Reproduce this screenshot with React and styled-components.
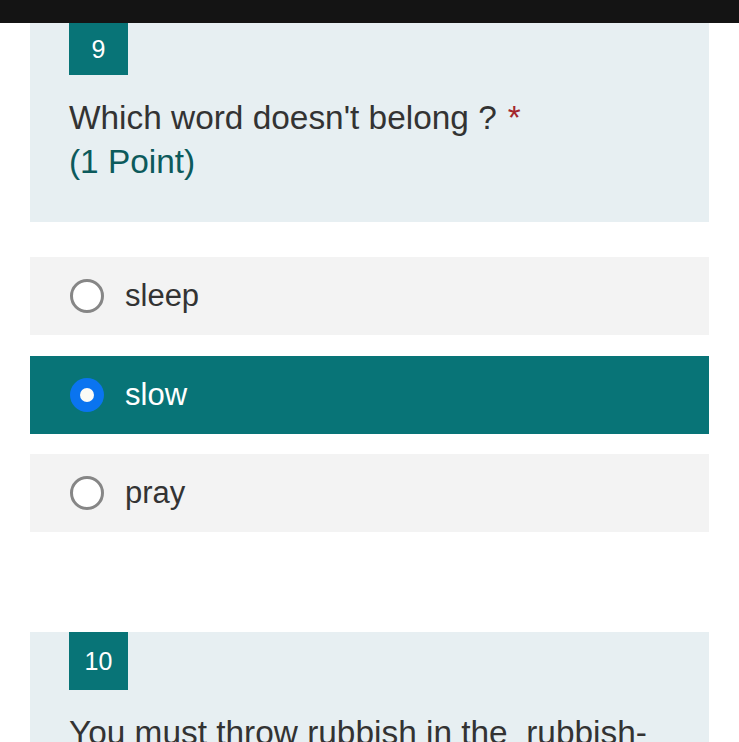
import React, {useState} from 'react';
import styled, {createGlobalStyle} from 'styled-components';

const GlobalStyle = createGlobalStyle`
  body {
    margin: 0;
    background: #ffffff;
    font-family: "Liberation Sans", Arial, sans-serif;
  }
`

const StatusBar = styled.div`
  height: 23px;
  background: #141414;
`

const Page = styled.div`
  padding: 0 30px;
  display: flex;
  flex-direction: column;
`

const QuestionCard = styled.section`
  background: #e7eff2;
  padding: 0 39px ${p => p.bottom || 38}px;
  margin-top: ${p => p.top || 0}px;
`

const Badge = styled.div`
  width: 59px;
  height: ${p => p.h || 58}px;
  background: #087477;
  color: #ffffff;
  font-size: 25px;
  display: flex;
  align-items: center;
  justify-content: center;
`

const Title = styled.div`
  margin-top: 21px;
  font-size: 33.4px;
  line-height: 44px;
  color: #333333;
`

const Required = styled.span`
  color: #a4262c;
  margin-left: 11px;
`

const Points = styled.div`
  color: #0c5a5c;
`

const Options = styled.div`
  margin-top: 35px;
  display: flex;
  flex-direction: column;
  gap: 20.5px;
`

const OptionRow = styled.label`
  height: 78px;
  display: flex;
  align-items: center;
  gap: 21px;
  padding-left: 40px;
  background: ${p => (p.selected ? '#087477' : '#f3f3f3')};
  color: ${p => (p.selected ? '#ffffff' : '#333333')};
  font-size: 31px;
  cursor: pointer;
`

const Radio = styled.span`
  box-sizing: border-box;
  width: 34px;
  height: 34px;
  border-radius: 50%;
  display: flex;
  align-items: center;
  justify-content: center;
  background: ${p => (p.checked ? '#0a74f0' : '#ffffff')};
  border: ${p => (p.checked ? 'none' : '3px solid #868686')};

  &::after {
    content: '';
    display: ${p => (p.checked ? 'block' : 'none')};
    width: 14px;
    height: 14px;
    border-radius: 50%;
    background: #fbfbf6;
  }
`

const App = () => {
  const [answer, setAnswer] = useState('slow')
  const choices = ['sleep', 'slow', 'pray']

  return (
    <>
      <GlobalStyle />
      <StatusBar />
      <Page>
        <QuestionCard>
          <Badge h={52}>9</Badge>
          <Title>
            Which word doesn't belong ?<Required>*</Required>
            <Points>(1 Point)</Points>
          </Title>
        </QuestionCard>

        <Options>
          {choices.map(c => (
            <OptionRow key={c} selected={answer === c} onClick={() => setAnswer(c)}>
              <Radio checked={answer === c} />
              {c}
            </OptionRow>
          ))}
        </Options>

        <QuestionCard top={100}>
          <Badge>10</Badge>
          <Title>You must throw rubbish in the&nbsp; rubbish-bin.</Title>
        </QuestionCard>
      </Page>
    </>
  )
}

export default App;
